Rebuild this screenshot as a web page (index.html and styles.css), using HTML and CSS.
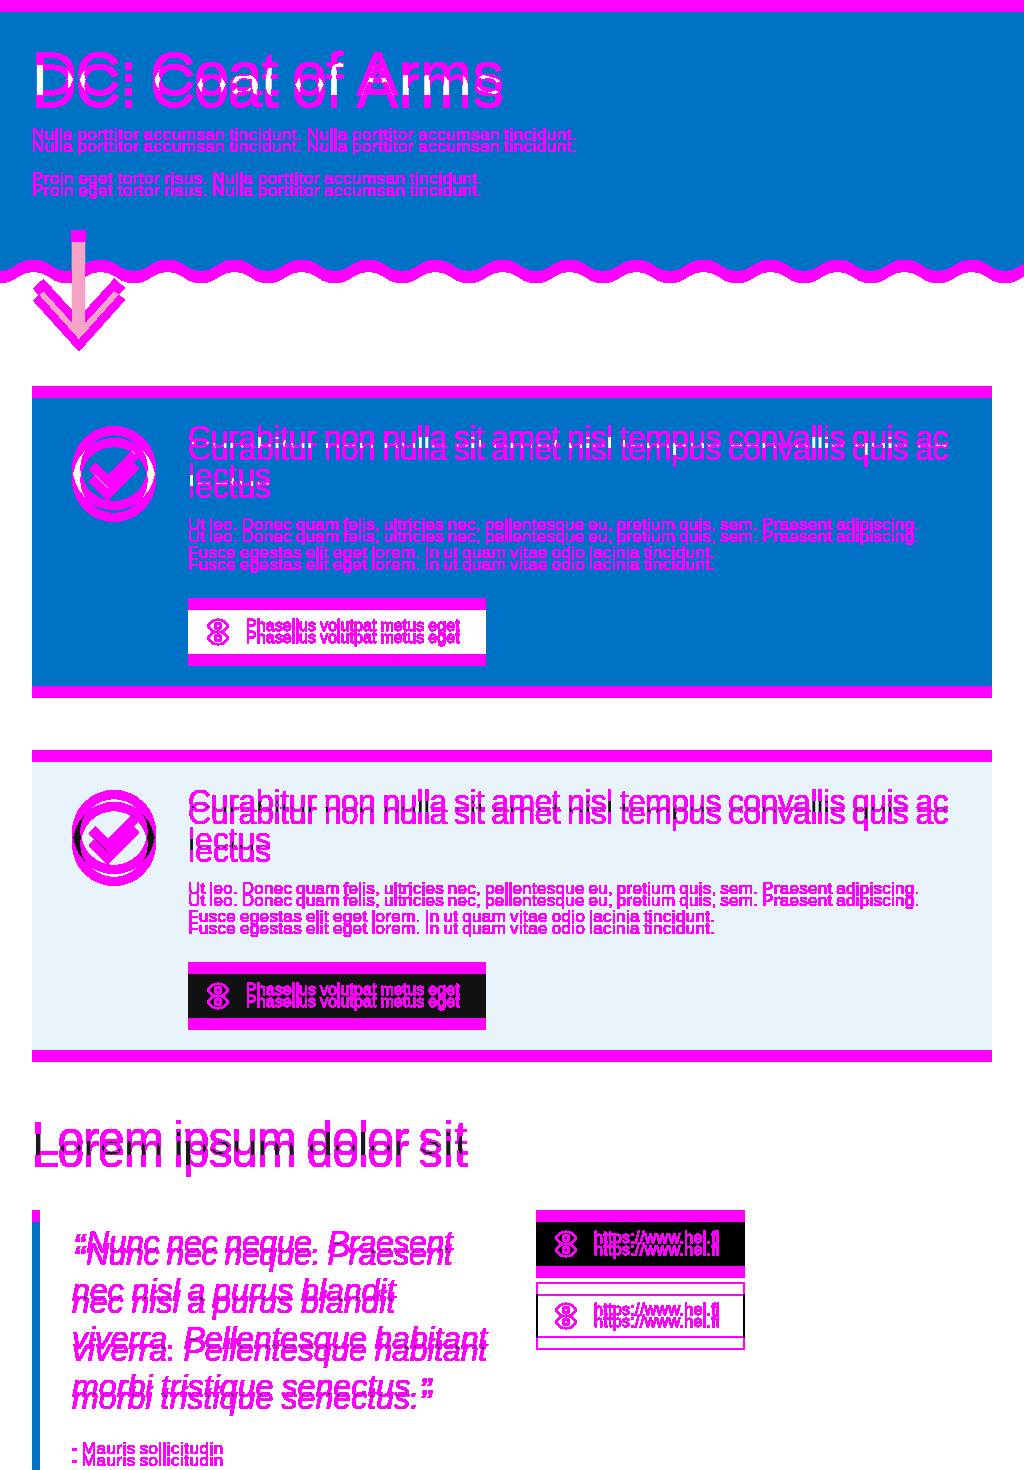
FILE: index.html
```html
<!DOCTYPE html>
<html lang="la">
<head>
<meta charset="utf-8">
<title>DC: Coat of Arms</title>
<link rel="stylesheet" href="styles.css">
</head>
<body>
<svg class="defs" width="0" height="0" aria-hidden="true">
  <!-- Marks in magenta every pixel that changes when the page moves down 12px -->
  <filter id="shift-diff" filterUnits="userSpaceOnUse" x="0" y="0" width="1024" height="1470" color-interpolation-filters="sRGB">
    <feOffset in="SourceGraphic" dy="12" result="moved"/>
    <feBlend in="SourceGraphic" in2="moved" mode="difference"/>
    <feColorMatrix type="matrix" values="0 0 0 0 1  0 0 0 0 0  0 0 0 0 1  100 100 100 0 -13" result="mask"/>
    <feMerge><feMergeNode in="SourceGraphic"/><feMergeNode in="mask"/></feMerge>
  </filter>
  <symbol id="eye" viewBox="0 0 24 24"><path fill="none" stroke="currentColor" stroke-width="1.7" d="M2 12C7 3.500 17 3.500 22 12C17 20.500 7 20.500 2 12Z"/><circle cx="12" cy="12" r="2.700" fill="none" stroke="currentColor" stroke-width="2.600"/></symbol>
  <symbol id="check" viewBox="0 0 24 24"><path fill="currentColor" fill-rule="evenodd" d="M12 2A10 10 0 1 1 12 22A10 10 0 1 1 12 2ZM12 4A8 8 0 1 0 12 20A8 8 0 1 0 12 4ZM16.500 7.750L18 9.250L10.500 16.850L6 12.350L7.500 10.750L10.500 13.750Z"/></symbol>
</svg>
<main class="page">
  <header class="hero">
    <h1>DC: Coat of <span class="arms">Arms</span></h1>
    <p>Nulla porttitor accumsan tincidunt. Nulla porttitor accumsan tincidunt.</p>
    <p>Proin eget tortor risus. Nulla porttitor accumsan tincidunt.</p>
  </header>
  <svg class="wave" width="1024" height="12" aria-hidden="true">
    <defs><pattern id="koros" width="67" height="12" patternUnits="userSpaceOnUse"><path fill="#0072c6" d="M0 0V11C16.500 11 16.500 0 33.500 0C50.500 0 50.500 11 67 11V0Z"/></pattern></defs>
    <rect width="1024" height="12" fill="url(#koros)"/>
  </svg>
  <svg class="arrow" width="94" height="112" viewBox="0 0 94 112" aria-hidden="true"><path fill="#f5a3c7" d="M39.700 0H53.300V80.500L82.500 48.500L93 58L47 109.500L1 58.500L11.500 49L39.700 80Z"/></svg>

  <section class="card card-blue">
    <svg class="badge" aria-hidden="true"><use href="#check"/></svg>
    <div>
      <h3><span class="first">Curabitur</span> non nulla sit amet nisl tempus convallis quis ac<br><span class="last">lectus</span></h3>
      <p>Ut leo. Donec quam felis, ultricies nec, pellentesque eu, pretium quis, sem. Praesent adipiscing.<br><span class="body-end">Fusce egestas elit eget lorem. In ut quam vitae odio lacinia tincidunt.</span></p>
      <a class="btn btn-wide"><svg aria-hidden="true"><use href="#eye"/></svg>Phasellus volutpat metus eget</a>
    </div>
  </section>

  <section class="card card-light">
    <svg class="badge" aria-hidden="true"><use href="#check"/></svg>
    <div>
      <h3><span class="first">Curabitur</span> non nulla sit amet nisl tempus convallis quis ac<br><span class="last">lectus</span></h3>
      <p>Ut leo. Donec quam felis, ultricies nec, pellentesque eu, pretium quis, sem. Praesent adipiscing.<br><span class="body-end">Fusce egestas elit eget lorem. In ut quam vitae odio lacinia tincidunt.</span></p>
      <a class="btn btn-wide"><svg aria-hidden="true"><use href="#eye"/></svg>Phasellus volutpat metus eget</a>
    </div>
  </section>

  <h2>Lorem ipsum dolor <span class="sit">sit</span></h2>
  <div class="columns">
    <blockquote>
      <p class="quote"><b class="open">“</b><span class="q1">Nunc nec neque. Praesent</span><br><span class="q2">nec nisl a purus blandit</span><br><span class="q3">viverra. Pellentesque habitant</span><br><span class="q4">morbi tristique senectus.</span><b class="close">”</b></p>
      <p class="author">- Mauris sollicitudin</p>
    </blockquote>
    <div class="links">
      <a class="btn btn-solid"><svg aria-hidden="true"><use href="#eye"/></svg>https://www.hel.fi</a>
      <a class="btn btn-outline"><svg aria-hidden="true"><use href="#eye"/></svg>https://www.hel.fi</a>
    </div>
  </div>
</main>
</body>
</html>
```
FILE: styles.css
```css
* { box-sizing: border-box; }
body { margin: 0; font-family: "Liberation Sans", Arial, sans-serif; }
h1, h2, h3, p, blockquote { margin: 0; font-weight: 400; white-space: nowrap; }
.defs { position: absolute; }
.page { position: relative; width: 1024px; height: 1470px; overflow: hidden; background: #fff; color: #1a1a1a; filter: url(#shift-diff); }
p { font-size: 17px; line-height: 28px; letter-spacing: 0.5px; word-spacing: -1px; -webkit-text-stroke: 0.15px; }

.hero { height: 260px; padding: 42px 32px 0; background: #0072c6; color: #fff; }
.hero h1 { margin-bottom: 15px; font-size: 62px; line-height: 64px; letter-spacing: -1px; word-spacing: -1.5px; -webkit-text-stroke: 0.4px; }
.hero h1 .arms { letter-spacing: 0.8px; }
.hero p + p { margin-top: 16px; }
.wave { display: block; margin-bottom: 114px; }
.arrow { position: absolute; left: 32px; top: 230px; }

.card { display: grid; grid-template-columns: 100px 1fr; gap: 24px; height: 300px; margin: 0 32px 64px; padding: 32px; }
.card-blue { background: #0072c6; color: #fff; }
.card-light { margin-bottom: 0; background: #e8f3fc; color: #111; }
.badge { width: 100px; height: 100px; }
.card h3 { margin-bottom: 17px; font-size: 32px; line-height: 38px; letter-spacing: -0.65px; word-spacing: -1px; }
.card h3 .first { letter-spacing: -0.35px; }
.card h3 .last { letter-spacing: -0.1px; }
.card p { margin-bottom: 31px; letter-spacing: 0.28px; word-spacing: -1.2px; }
.card .body-end { letter-spacing: 0.36px; }

.btn { display: flex; align-items: center; gap: 16px; width: 209px; height: 56px; padding-left: 18px; font-size: 16px; line-height: 24px; letter-spacing: 0.33px; -webkit-text-stroke: 0.4px; }
.btn-wide { width: 298px; letter-spacing: 0.08px; word-spacing: -0.7px; }
.btn svg { width: 24px; height: 24px; }
.card-blue .btn { background: #fff; color: #000; }
.card-light .btn { background: #111; color: #fff; }

h2 { margin: 60px 32px 42px; font-size: 48px; line-height: 58px; letter-spacing: -1.1px; word-spacing: -1.5px; }
h2 .sit { letter-spacing: 0.5px; }
.columns { display: grid; grid-template-columns: 1fr 1fr; gap: 48px; height: 270px; padding: 0 32px; }
blockquote { height: 300px; padding: 8px 0 0 32px; border-left: 8px solid #0072c6; }
.quote { margin-bottom: 25px; font-size: 32px; line-height: 48px; font-style: italic; word-spacing: -1px; }
.quote b { display: inline-block; font-size: 27px; line-height: 30px; letter-spacing: 0; }
.open { width: 13px; margin-left: 1px; }
.close { width: 13px; }
.q1 { letter-spacing: -0.4px; }
.q2 { letter-spacing: 0; }
.q3 { letter-spacing: -0.15px; }
.q4 { letter-spacing: 0.1px; }
.author { letter-spacing: 0.48px; word-spacing: -1.5px; }
.links { display: flex; flex-direction: column; gap: 16px; }
.btn-solid { background: #000; color: #fff; }
.btn-outline { padding-left: 16px; border: 2px solid #000; color: #000; }
```
